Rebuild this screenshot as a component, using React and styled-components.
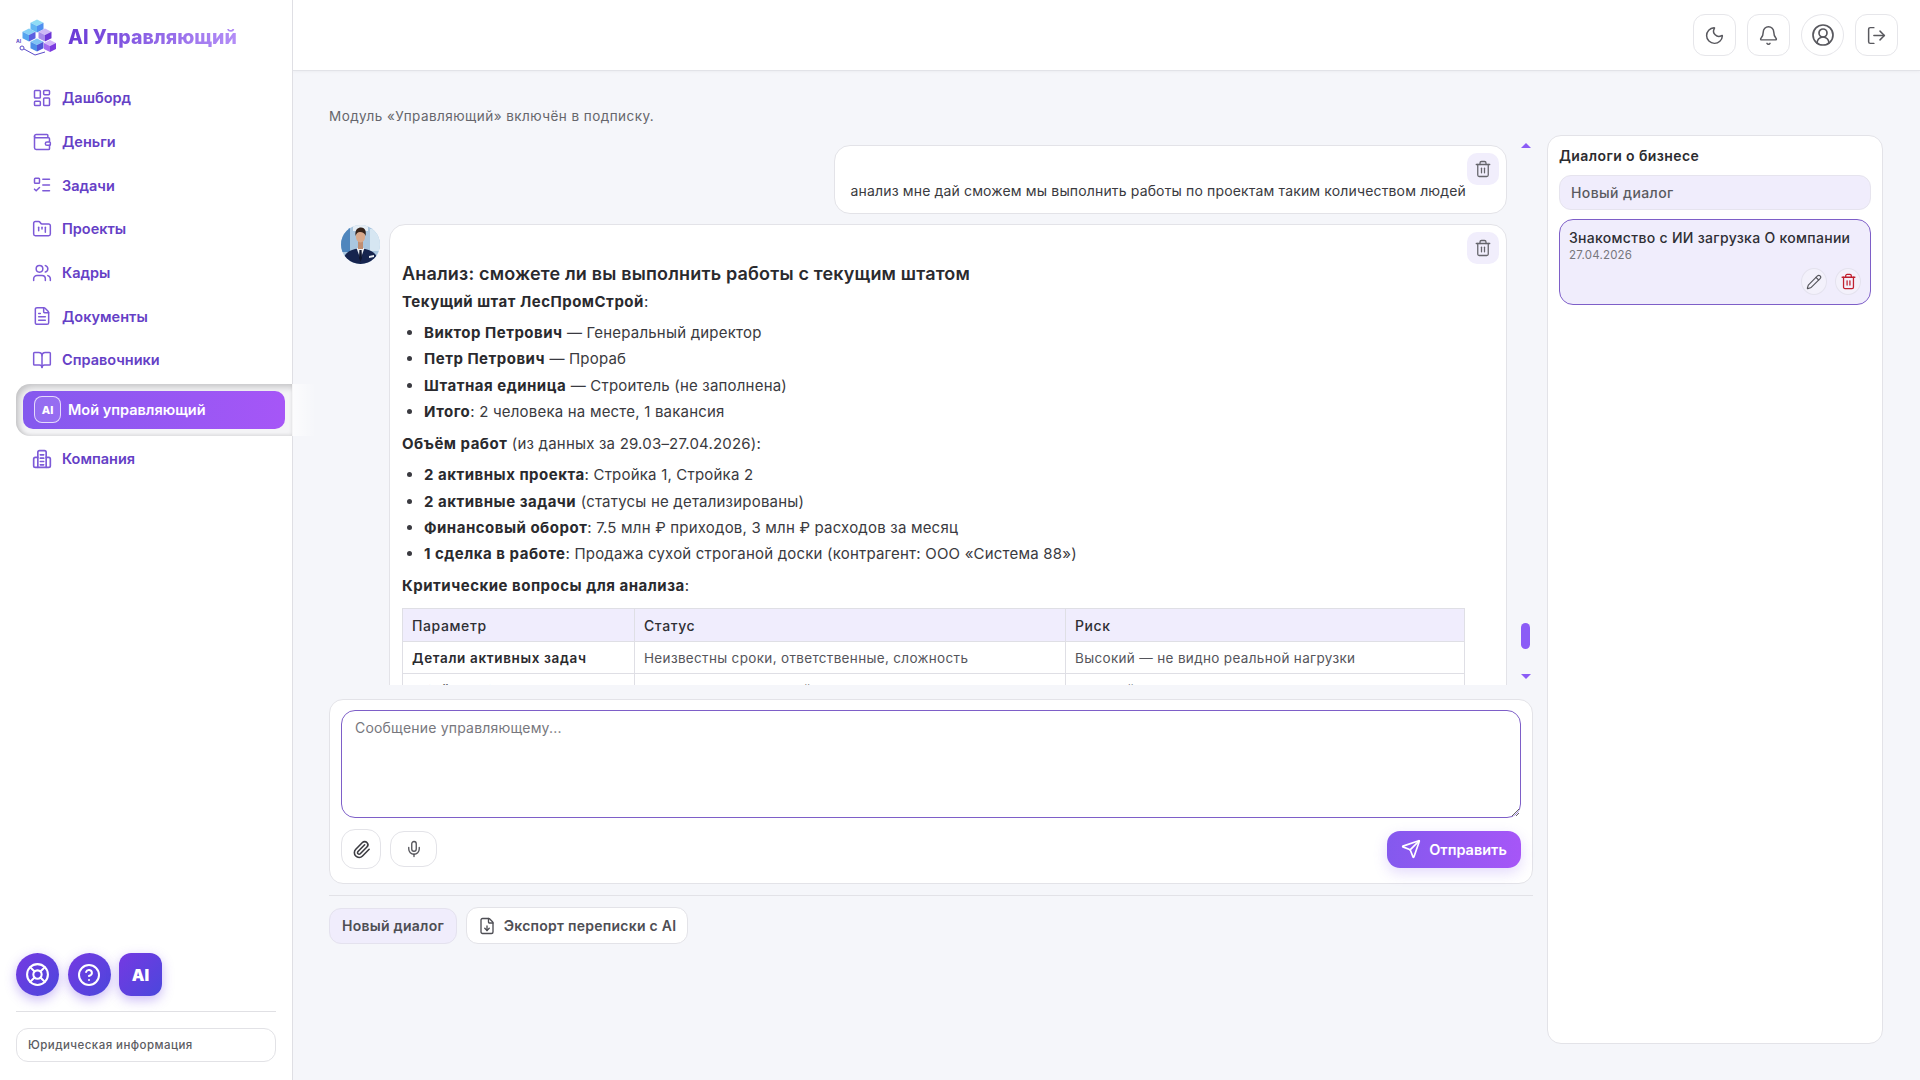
import React from 'react';
import styled, { createGlobalStyle } from 'styled-components';
import {
  LayoutDashboard,
  Wallet,
  ListTodo,
  FolderKanban,
  Users,
  FileText,
  BookOpen,
  LifeBuoy,
  CircleHelp,
  Moon,
  Bell,
  CircleUserRound,
  LogOut,
  Trash2,
  Pencil,
  Paperclip,
  Mic,
  Send,
  FileDown,
} from 'lucide-react';

const GlobalStyle = createGlobalStyle`
  html, body {
    margin: 0;
    padding: 0;
    height: 100%;
    background: #f5f6fa;
    font-family: Inter, "Noto Sans", sans-serif;
    color: #2b2b30;
  }
  * {
    box-sizing: border-box;
  }
`;

const Cube = ({ x, y, s = 9, top, left, right }) => (
  <g>
    <polygon points={`${x},${y - s} ${x + s},${y - s / 2} ${x},${y} ${x - s},${y - s / 2}`} fill={top} />
    <polygon points={`${x - s},${y - s / 2} ${x},${y} ${x},${y + s} ${x - s},${y + s / 2}`} fill={left} />
    <polygon points={`${x + s},${y - s / 2} ${x},${y} ${x},${y + s} ${x + s},${y + s / 2}`} fill={right} />
  </g>
);

const Logo = () => (
  <svg width="42" height="40" viewBox="0 0 42 40">
    <Cube x={21} y={9} s={6.5} top="#8fdcf5" left="#62b6f2" right="#4f8ff0" />
    <Cube x={13} y={18} s={6.5} top="#86d0f7" left="#55a4ef" right="#5a5fe0" />
    <Cube x={29} y={18} s={6.5} top="#cdb8f5" left="#a88cea" right="#6c35d6" />
    <Cube x={21} y={28} s={6.5} top="#7ec3f5" left="#4e8fe8" right="#4f55d8" />
    <Cube x={34} y={29} s={6} top="#d4b5fa" left="#a56bf0" right="#7d3be0" />
    <text x="0" y="26" fontSize="5" fontWeight="700" fill="#5b4bc8" fontFamily="Inter, sans-serif">
      AI
    </text>
    <circle cx="6" cy="31" r="2" fill="none" stroke="#5b4bc8" strokeWidth="1" />
    <path d="M8 32 L19 38 L29 35" fill="none" stroke="#5b4bc8" strokeWidth="1" />
  </svg>
);

const Avatar = () => (
  <svg width="39" height="39" viewBox="0 0 39 39">
    <defs>
      <clipPath id="ava">
        <circle cx="19.5" cy="19.5" r="19.5" />
      </clipPath>
    </defs>
    <g clipPath="url(#ava)">
      <rect width="39" height="39" fill="#a9c6df" />
      <rect x="0" y="0" width="9" height="27" fill="#4f86bd" />
      <rect x="29" y="4" width="10" height="22" fill="#d6e6f2" />
      <rect x="12" y="0" width="15" height="6" fill="#e6eef5" />
      <path d="M1 39 C2 28 9 24.5 19 23 C30 24.5 37 28 38 39 Z" fill="#16244e" />
      <path d="M15.5 23 L19.5 34 L23.5 23 Z" fill="#eef1f5" />
      <path d="M18.4 25 L20.6 25 L21 33 L19.5 37 L18 33 Z" fill="#10162e" />
      <path d="M28 31 L33 30 L33 32 L28 33 Z" fill="#e8edf3" />
      <rect x="17" y="15" width="5" height="9" fill="#c08d70" />
      <ellipse cx="19.5" cy="11.5" rx="4.6" ry="6" fill="#d9a98b" />
      <path d="M14.6 11 C13.5 4.5 17 2.5 20 2.5 C24.5 2.5 25.5 7 24.5 11 C23.5 8 22 7 19 7 C16.5 7 15.5 8.5 14.6 11 Z" fill="#35231a" />
    </g>
  </svg>
);

const CompanyIcon = () => (
  <svg width="20" height="20" viewBox="0 0 24 24" fill="none" stroke="currentColor" strokeWidth="2" strokeLinecap="round" strokeLinejoin="round">
    <path d="M7 22V4a2 2 0 0 1 2-2h6a2 2 0 0 1 2 2v18" />
    <path d="M7 10H4a2 2 0 0 0-2 2v8a2 2 0 0 0 2 2h16a2 2 0 0 0 2-2v-8a2 2 0 0 0-2-2h-3" />
    <path d="M10 7h4M10 11h4M10 15h4M10 19h4" />
  </svg>
);

const navTop = [
  { label: 'Дашборд', icon: LayoutDashboard },
  { label: 'Деньги', icon: Wallet },
  { label: 'Задачи', icon: ListTodo },
  { label: 'Проекты', icon: FolderKanban },
  { label: 'Кадры', icon: Users },
  { label: 'Документы', icon: FileText },
  { label: 'Справочники', icon: BookOpen },
];

const staff = [
  ['Виктор Петрович', ' — Генеральный директор'],
  ['Петр Петрович', ' — Прораб'],
  ['Штатная единица', ' — Строитель (не заполнена)'],
  ['Итого', ': 2 человека на месте, 1 вакансия'],
];

const volume = [
  ['2 активных проекта', ': Стройка 1, Стройка 2'],
  ['2 активные задачи', ' (статусы не детализированы)'],
  ['Финансовый оборот', ': 7.5 млн ₽ приходов, 3 млн ₽ расходов за месяц'],
  ['1 сделка в работе', ': Продажа сухой строганой доски (контрагент: ООО «Система 88»)'],
];

const App = () => {
  return (
    <Page>
      <GlobalStyle />
      <Sidebar>
        <Brand>
          <Logo />
          <BrandName>AI Управляющий</BrandName>
        </Brand>
        <Nav>
          {navTop.map((item) => (
            <NavItem key={item.label}>
              <item.icon size={20} strokeWidth={1.8} />
              <span>{item.label}</span>
            </NavItem>
          ))}
          <ActiveWrap>
            <ActiveItem>
              <AiBadge>AI</AiBadge>
              <span>Мой управляющий</span>
            </ActiveItem>
          </ActiveWrap>
          <NavItem>
            <CompanyIcon />
            <span>Компания</span>
          </NavItem>
        </Nav>
        <SideActions>
          <RoundAction>
            <LifeBuoy size={25} strokeWidth={2} />
          </RoundAction>
          <RoundAction>
            <CircleHelp size={24} strokeWidth={2} />
          </RoundAction>
          <RoundAction $square>AI</RoundAction>
        </SideActions>
        <SideDivider />
        <LegalBox>Юридическая информация</LegalBox>
      </Sidebar>

      <Content>
        <Header>
          <HeadButton>
            <Moon size={21} strokeWidth={1.7} />
          </HeadButton>
          <HeadButton>
            <Bell size={21} strokeWidth={1.7} />
          </HeadButton>
          <HeadButton $round>
            <CircleUserRound size={24} strokeWidth={1.7} />
          </HeadButton>
          <HeadButton>
            <LogOut size={21} strokeWidth={1.7} />
          </HeadButton>
        </Header>

        <Body>
          <ChatColumn>
            <Notice>Модуль «Управляющий» включён в подписку.</Notice>
            <ChatRow>
              <Messages>
                <UserBubble>
                  <DeleteButton>
                    <Trash2 size={18} strokeWidth={1.7} />
                  </DeleteButton>
                  анализ мне дай сможем мы выполнить работы по проектам таким количеством людей
                </UserBubble>
                <AiRow>
                  <AvatarSlot>
                    <Avatar />
                  </AvatarSlot>
                  <AiBubble>
                    <DeleteButton>
                      <Trash2 size={18} strokeWidth={1.7} />
                    </DeleteButton>
                    <AnswerTitle>Анализ: сможете ли вы выполнить работы с текущим штатом</AnswerTitle>
                    <Para>
                      <b>Текущий штат ЛесПромСтрой</b>:
                    </Para>
                    <BulletList>
                      {staff.map(([head, rest]) => (
                        <li key={head}>
                          <b>{head}</b>
                          {rest}
                        </li>
                      ))}
                    </BulletList>
                    <Para>
                      <b>Объём работ</b> (из данных за 29.03–27.04.2026):
                    </Para>
                    <BulletList>
                      {volume.map(([head, rest]) => (
                        <li key={head}>
                          <b>{head}</b>
                          {rest}
                        </li>
                      ))}
                    </BulletList>
                    <Para>
                      <b>Критические вопросы для анализа</b>:
                    </Para>
                    <RiskTable>
                      <thead>
                        <tr>
                          <th>Параметр</th>
                          <th>Статус</th>
                          <th>Риск</th>
                        </tr>
                      </thead>
                      <tbody>
                        <tr>
                          <td>
                            <b>Детали активных задач</b>
                          </td>
                          <td>Неизвестны сроки, ответственные, сложность</td>
                          <td>Высокий — не видно реальной нагрузки</td>
                        </tr>
                        <tr>
                          <td>
                            <b>Объём работ</b>
                          </td>
                          <td>Не указан нормативный</td>
                          <td>Высокий</td>
                        </tr>
                      </tbody>
                    </RiskTable>
                  </AiBubble>
                </AiRow>
              </Messages>
              <Rail>
                <ArrowUp />
                <Thumb />
                <ArrowDown />
              </Rail>
            </ChatRow>

            <Composer>
              <MessageInput placeholder="Сообщение управляющему..." />
              <ComposerBar>
                <AttachButton>
                  <Paperclip size={19} strokeWidth={2} />
                </AttachButton>
                <MicButton>
                  <Mic size={18} strokeWidth={1.8} />
                </MicButton>
                <SendButton>
                  <Send size={20} strokeWidth={2} />
                  Отправить
                </SendButton>
              </ComposerBar>
            </Composer>
            <BottomDivider />
            <BottomBar>
              <NewDialogButton>Новый диалог</NewDialogButton>
              <ExportButton>
                <FileDown size={18} strokeWidth={1.8} />
                Экспорт переписки с AI
              </ExportButton>
            </BottomBar>
          </ChatColumn>

          <DialogsPanel>
            <PanelTitle>Диалоги о бизнесе</PanelTitle>
            <NewDialogRow>Новый диалог</NewDialogRow>
            <DialogCard>
              <DialogName>Знакомство с ИИ загрузка О компании</DialogName>
              <DialogDate>27.04.2026</DialogDate>
              <DialogTools>
                <ToolButton>
                  <Pencil size={16} strokeWidth={1.7} />
                </ToolButton>
                <ToolButton $danger>
                  <Trash2 size={17} strokeWidth={1.8} />
                </ToolButton>
              </DialogTools>
            </DialogCard>
          </DialogsPanel>
        </Body>
      </Content>
    </Page>
  );
};

export default App;

const Page = styled.div`
  display: flex;
  width: 100%;
  height: 100vh;
  overflow: hidden;
  background: #f5f6fa;
`;

const Sidebar = styled.aside`
  position: relative;
  z-index: 2;
  flex: 0 0 293px;
  display: flex;
  flex-direction: column;
  background: #fff;
  border-right: 1px solid #dfdfe4;
  padding-bottom: 18px;
`;

const Brand = styled.div`
  height: 76px;
  display: flex;
  align-items: center;
  gap: 10px;
  padding: 0 0 2px 16px;
`;

const BrandName = styled.div`
  font-size: 19.5px;
  font-weight: 800;
  background: linear-gradient(90deg, #6a3bd6, #b48ef7);
  -webkit-background-clip: text;
  background-clip: text;
  color: transparent;
`;

const Nav = styled.nav`
  display: flex;
  flex-direction: column;
`;

const NavItem = styled.div`
  height: 43.7px;
  display: flex;
  align-items: center;
  gap: 10px;
  padding-left: 32px;
  font-size: 14.5px;
  font-weight: 600;
  color: #6540c6;

  svg {
    color: #7d5ad8;
    flex: none;
  }
`;

const ActiveWrap = styled.div`
  position: relative;
  height: 52px;
  margin: 2px 0 1px 16px;
  padding: 7px;
  background: #f4f4f6;
  border-radius: 14px 0 0 14px;
  box-shadow: inset 3px 3px 6px rgba(0, 0, 0, 0.2), inset 0 -2px 3px rgba(0, 0, 0, 0.05);

  &::after {
    content: '';
    position: absolute;
    left: 100%;
    top: 0;
    width: 24px;
    height: 100%;
    background: linear-gradient(90deg, rgba(255, 255, 255, 0.7), rgba(255, 255, 255, 0));
  }
`;

const ActiveItem = styled.div`
  height: 38px;
  display: flex;
  align-items: center;
  gap: 7px;
  padding-left: 11px;
  border-radius: 10px;
  background: linear-gradient(90deg, #8459ee, #a656f7);
  color: #fff;
  font-size: 14.5px;
  font-weight: 600;
`;

const AiBadge = styled.div`
  width: 27px;
  height: 27px;
  display: flex;
  align-items: center;
  justify-content: center;
  border: 1px solid rgba(255, 255, 255, 0.75);
  border-radius: 8px;
  background: rgba(255, 255, 255, 0.12);
  font-size: 11px;
  font-weight: 800;
`;

const SideActions = styled.div`
  margin-top: auto;
  display: flex;
  gap: 8.5px;
  padding-left: 16px;
`;

const RoundAction = styled.button`
  width: 43px;
  height: 43px;
  padding: 0;
  border: none;
  border-radius: ${(p) => (p.$square ? '12px' : '50%')};
  display: flex;
  align-items: center;
  justify-content: center;
  background: linear-gradient(135deg, #7539e2, #4b47dc);
  box-shadow: 0 4px 12px rgba(105, 60, 230, 0.35);
  color: #fff;
  font-family: Inter, sans-serif;
  font-size: 16px;
  font-weight: 900;
`;

const SideDivider = styled.div`
  height: 1px;
  margin: 15px 16px 16px;
  background: #e0e0e4;
`;

const LegalBox = styled.div`
  height: 34px;
  margin: 0 16px;
  padding-left: 11px;
  display: flex;
  align-items: center;
  border: 1px solid #e2e2e6;
  border-radius: 12px;
  font-size: 11.5px;
  font-weight: 500;
  letter-spacing: 0.45px;
  color: #5c5c62;
`;

const Content = styled.div`
  flex: 1;
  min-width: 0;
  display: flex;
  flex-direction: column;
`;

const Header = styled.header`
  height: 71px;
  flex: none;
  display: flex;
  align-items: center;
  justify-content: flex-end;
  gap: 11px;
  padding-right: 22px;
  background: #fff;
  border-bottom: 1px solid #e2e3e8;
  box-shadow: 0 1px 3px rgba(0, 0, 0, 0.04);
`;

const HeadButton = styled.button`
  width: 43px;
  height: 42px;
  padding: 0;
  display: flex;
  align-items: center;
  justify-content: center;
  background: #fff;
  border: 1px solid #e6e6ea;
  border-radius: ${(p) => (p.$round ? '50%' : '12px')};
  color: #58585e;
`;

const Body = styled.main`
  flex: 1;
  min-height: 0;
  display: flex;
  gap: 14px;
  padding: 34px 37px 36px 36px;
`;

const ChatColumn = styled.div`
  flex: 1;
  min-width: 0;
  display: flex;
  flex-direction: column;
`;

const Notice = styled.div`
  height: 30px;
  line-height: 22px;
  font-size: 13.5px;
  letter-spacing: 0.45px;
  color: #66666c;
`;

const ChatRow = styled.div`
  height: 550px;
  flex: none;
  display: flex;
`;

const Messages = styled.div`
  flex: 1;
  min-width: 0;
  overflow: hidden;
  display: flex;
  flex-direction: column;
  gap: 10px;
  padding: 10px 11px 0 0;
`;

const Bubble = styled.div`
  position: relative;
  background: #fff;
  border: 1px solid #e3e3e8;
  border-radius: 16px;
  font-size: 14px;
  color: #3a3a40;
  letter-spacing: 0.15px;
`;

const UserBubble = styled(Bubble)`
  align-self: flex-end;
  flex: none;
  height: 69px;
  padding: 35px 40px 0 16px;
  line-height: 20px;
  white-space: nowrap;
`;

const DeleteButton = styled.button`
  position: absolute;
  top: 7px;
  right: 7px;
  width: 32px;
  height: 32px;
  padding: 0;
  border: none;
  border-radius: 10px;
  display: flex;
  align-items: center;
  justify-content: center;
  background: #f1eefc;
  color: #66666c;
`;

const AiRow = styled.div`
  display: flex;
  gap: 9px;
  padding-left: 12px;
`;

const AvatarSlot = styled.div`
  flex: none;
  width: 39px;
  height: 39px;
  margin-top: 1px;
`;

const AiBubble = styled(Bubble)`
  flex: 1;
  min-width: 0;
  padding: 37px 12px 20px 12px;
  font-size: 15px;
  letter-spacing: 0.2px;
`;

const AnswerTitle = styled.h3`
  margin: 0;
  height: 24px;
  line-height: 24px;
  font-size: 18px;
  font-weight: 600;
  letter-spacing: 0.17px;
  color: #2a2a2e;
`;

const Para = styled.p`
  margin: 4px 0 0;
  height: 24px;
  line-height: 24px;
  color: #3a3a40;

  b {
    font-weight: 700;
    letter-spacing: 0.5px;
    color: #2a2a2e;
  }
`;

const BulletList = styled.ul`
  margin: 6px 0 6.6px;
  padding-left: 22px;

  li {
    height: 26.4px;
    line-height: 26.4px;
    white-space: nowrap;
  }

  b {
    font-weight: 700;
    letter-spacing: 0.5px;
    color: #2a2a2e;
  }
`;

const RiskTable = styled.table`
  width: 1063px;
  margin-top: 10px;
  border-collapse: collapse;
  table-layout: fixed;
  font-size: 13.5px;
  letter-spacing: 0.33px;

  th,
  td {
    height: 32.5px;
    padding: 0 9px;
    border: 1px solid #dfdfe5;
    text-align: left;
    white-space: nowrap;
  }

  th {
    background: #f0edfd;
    font-size: 14px;
    font-weight: 500;
    letter-spacing: 0.6px;
    color: #2f2f34;
  }

  td {
    color: #55555b;
  }

  td b {
    font-weight: 600;
    letter-spacing: 0.65px;
    color: #2a2a2e;
  }

  th:nth-child(1) {
    width: 232px;
  }

  th:nth-child(2) {
    width: 431px;
  }
`;

const Rail = styled.div`
  flex: 0 0 15px;
  display: flex;
  flex-direction: column;
  align-items: center;
  padding: 8px 0 6px;
`;

const ArrowUp = styled.div`
  width: 0;
  height: 0;
  border-left: 5px solid transparent;
  border-right: 5px solid transparent;
  border-bottom: 5px solid #8b5cf6;
`;

const ArrowDown = styled.div`
  width: 0;
  height: 0;
  border-left: 5px solid transparent;
  border-right: 5px solid transparent;
  border-top: 5px solid #8b5cf6;
`;

const Thumb = styled.div`
  width: 9px;
  height: 26px;
  margin-top: auto;
  margin-bottom: 25px;
  border-radius: 5px;
  background: #8b5cf6;
`;

const Composer = styled.section`
  margin-top: 14px;
  height: 185px;
  flex: none;
  padding: 10px 11px;
  display: flex;
  flex-direction: column;
  background: #fff;
  border: 1px solid #e3e3e8;
  border-radius: 14px;
`;

const MessageInput = styled.textarea`
  display: block;
  width: 100%;
  height: 108px;
  flex: none;
  padding: 8px 13px;
  border: 1px solid #7e5fc8;
  border-radius: 14px;
  outline: none;
  resize: vertical;
  background: #fff;
  font-family: Inter, sans-serif;
  font-size: 14px;
  letter-spacing: 0.2px;

  &::placeholder {
    color: #77777d;
    opacity: 1;
  }
`;

const ComposerBar = styled.div`
  margin-top: 11px;
  display: flex;
  align-items: center;
  gap: 9px;
`;

const AttachButton = styled.button`
  width: 40px;
  height: 40px;
  padding: 0;
  display: flex;
  align-items: center;
  justify-content: center;
  background: #fff;
  border: 1px solid #e3e3e8;
  border-radius: 14px;
  color: #3c3c42;
`;

const MicButton = styled(AttachButton)`
  width: 47px;
  height: 36px;
  color: #55555b;
`;

const SendButton = styled.button`
  margin-left: auto;
  width: 134px;
  height: 37px;
  padding: 0;
  display: flex;
  align-items: center;
  justify-content: center;
  gap: 8px;
  border: none;
  border-radius: 13px;
  background: linear-gradient(90deg, #8459ee, #a656f7);
  box-shadow: 0 5px 14px rgba(130, 90, 240, 0.22);
  color: #fff;
  font-family: Inter, sans-serif;
  font-size: 14.5px;
  font-weight: 600;
`;

const BottomDivider = styled.div`
  height: 1px;
  margin-top: 11px;
  background: #e2e2e7;
`;

const BottomBar = styled.div`
  margin-top: 11px;
  display: flex;
  align-items: center;
  gap: 9px;
`;

const NewDialogButton = styled.button`
  width: 128px;
  height: 36px;
  padding: 0;
  background: #f0edfc;
  border: 1px solid #e4e2ee;
  border-radius: 12px;
  font-family: Inter, sans-serif;
  font-size: 14px;
  font-weight: 600;
  letter-spacing: 0.25px;
  color: #4e4e54;
`;

const ExportButton = styled.button`
  width: 222px;
  height: 37px;
  padding: 0;
  display: flex;
  align-items: center;
  justify-content: center;
  gap: 8px;
  background: #fff;
  border: 1px solid #e3e3e8;
  border-radius: 12px;
  font-family: Inter, sans-serif;
  font-size: 14px;
  font-weight: 600;
  letter-spacing: 0.25px;
  color: #4e4e54;
`;

const DialogsPanel = styled.aside`
  flex: 0 0 336px;
  margin-top: 30px;
  padding: 10px 11px;
  background: #fff;
  border: 1px solid #e3e3e8;
  border-radius: 14px;
`;

const PanelTitle = styled.div`
  height: 20px;
  line-height: 20px;
  font-size: 14px;
  font-weight: 600;
  letter-spacing: 0.4px;
  color: #2c2c30;
`;

const NewDialogRow = styled.div`
  margin-top: 9px;
  height: 35px;
  padding-left: 11px;
  display: flex;
  align-items: center;
  background: #f0edfc;
  border: 1px solid #e6e4ee;
  border-radius: 12px;
  font-size: 14px;
  font-weight: 500;
  letter-spacing: 0.4px;
  color: #5a5a60;
`;

const DialogCard = styled.div`
  margin-top: 9px;
  height: 86px;
  padding: 8px 9px 9px 9px;
  display: flex;
  flex-direction: column;
  background: #f0edfc;
  border: 1px solid #7e5fc8;
  border-radius: 14px;
`;

const DialogName = styled.div`
  line-height: 20px;
  font-size: 14px;
  font-weight: 500;
  letter-spacing: 0.3px;
  color: #2f2f34;
  white-space: nowrap;
`;

const DialogDate = styled.div`
  line-height: 14px;
  font-size: 11.5px;
  letter-spacing: 0.2px;
  color: #77777d;
`;

const DialogTools = styled.div`
  margin-top: auto;
  display: flex;
  justify-content: flex-end;
  gap: 8px;
`;

const ToolButton = styled.button`
  width: 26px;
  height: 27px;
  padding: 0;
  display: flex;
  align-items: center;
  justify-content: center;
  background: #f3f1fb;
  border: 1px solid #e4e2ee;
  border-radius: 50%;
  color: ${(p) => (p.$danger ? '#c0202f' : '#55555b')};
`;
